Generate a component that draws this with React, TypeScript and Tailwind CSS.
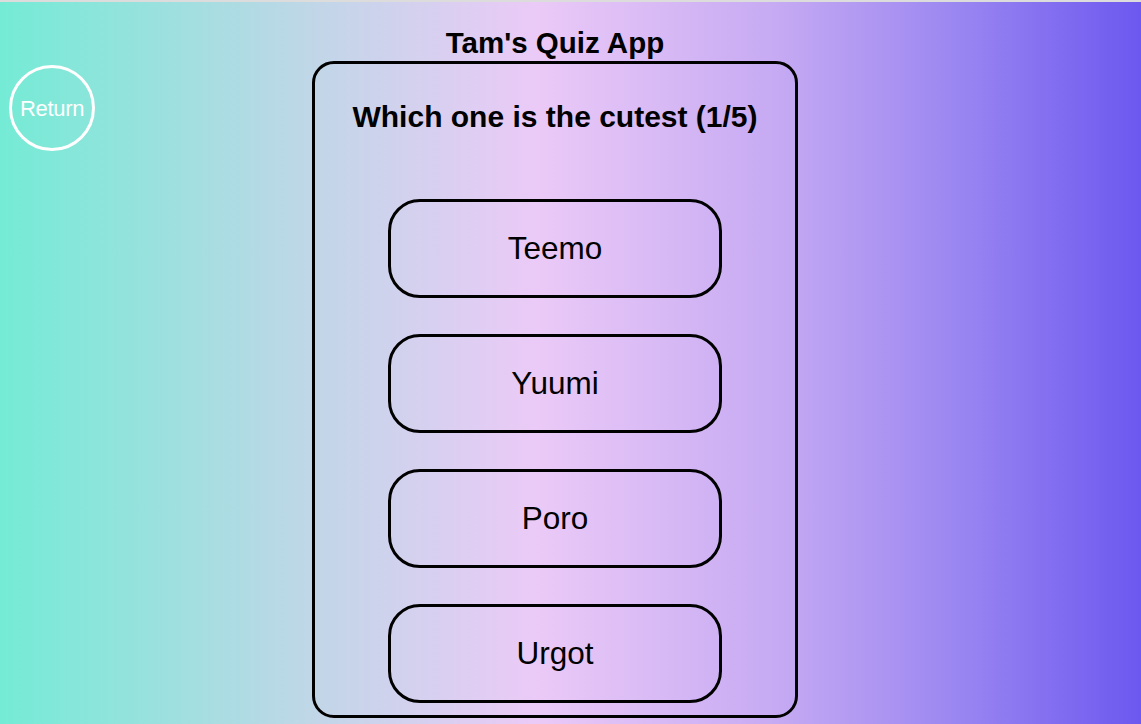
const answers = ["Teemo", "Yuumi", "Poro", "Urgot"];

export default function App() {
  return (
    <div className="h-[724px] w-full overflow-hidden font-['Liberation_Sans',Arial,sans-serif] text-black">
      <div className="h-[2px] bg-[#dcdcdc]"></div>
      <div className="flex h-[722px] items-start bg-[linear-gradient(90deg,#74ebd5_0%,#c2d6e8_28%,#ebcaf7_47%,#c6aaf3_68%,#9a86f1_84%,#6c58ef_100%)]">
        <button className="ml-[9px] mt-[63px] flex h-[86px] w-[86px] items-center justify-center rounded-full border-[3px] border-white text-[22px] tracking-[-0.3px] text-white">
          Return
        </button>
        <div className="ml-[217px] flex w-[486px] flex-col items-center">
          <h1 className="mt-[24px] text-[29.5px] font-bold leading-[33px]">Tam's Quiz App</h1>
          <div className="mt-[2px] flex h-[657px] w-[486px] flex-col items-center rounded-[22px] border-[3.5px] border-black">
            <h2 className="mt-[36px] text-[30px] font-bold leading-[34px]">Which one is the cutest (1/5)</h2>
            <div className="mt-[65px] flex flex-col gap-[36px]">
              {answers.map((a) => (
                <button
                  key={a}
                  className="flex h-[99px] w-[334px] items-center justify-center rounded-[32px] border-[3px] border-black text-[31.5px]"
                >
                  {a}
                </button>
              ))}
            </div>
          </div>
        </div>
      </div>
    </div>
  );
}
